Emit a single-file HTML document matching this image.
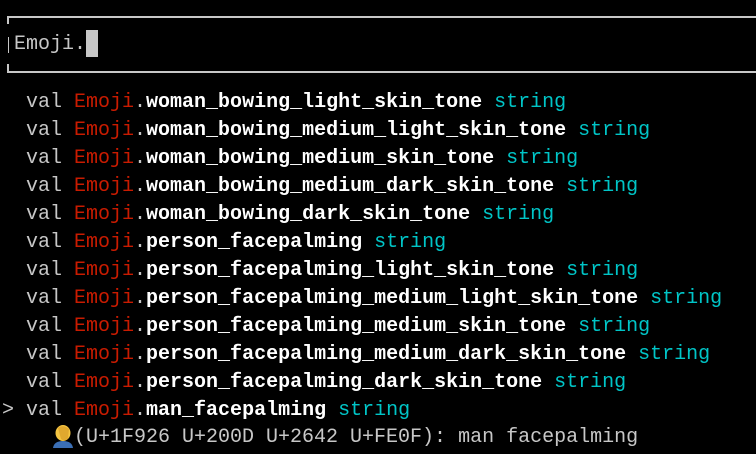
<!DOCTYPE html>
<html><head><style>
html,body{margin:0;padding:0;background:#000;width:756px;height:454px;overflow:hidden}
body{font-family:"Liberation Mono",monospace;font-size:20px;color:#c7c7c7;position:relative}
.l{position:absolute;left:2px;height:28px;line-height:28px;white-space:pre}
.r{color:#c91b00}.w{color:#fff;font-weight:bold}.c{color:#00c5c7}
.hl{position:absolute;background:#c7c7c7}
</style></head><body>
<div class="hl" style="left:7px;top:16px;width:749px;height:2px"></div>
<div class="hl" style="left:7px;top:16px;width:2px;height:8px"></div>
<div class="hl" style="left:7px;top:71px;width:749px;height:2px"></div>
<div class="hl" style="left:7px;top:64px;width:2px;height:8px"></div>
<div class="hl" style="left:8px;top:37px;width:1px;height:16px"></div>
<div class="l" style="left:14px;top:31px">Emoji.</div>
<div class="hl" style="left:86px;top:30px;width:12px;height:27px"></div>

<div class="l" style="top:89px">  val <span class="r">Emoji</span>.<span class="w">woman_bowing_light_skin_tone</span> <span class="c">string</span></div>
<div class="l" style="top:117px">  val <span class="r">Emoji</span>.<span class="w">woman_bowing_medium_light_skin_tone</span> <span class="c">string</span></div>
<div class="l" style="top:145px">  val <span class="r">Emoji</span>.<span class="w">woman_bowing_medium_skin_tone</span> <span class="c">string</span></div>
<div class="l" style="top:173px">  val <span class="r">Emoji</span>.<span class="w">woman_bowing_medium_dark_skin_tone</span> <span class="c">string</span></div>
<div class="l" style="top:201px">  val <span class="r">Emoji</span>.<span class="w">woman_bowing_dark_skin_tone</span> <span class="c">string</span></div>
<div class="l" style="top:229px">  val <span class="r">Emoji</span>.<span class="w">person_facepalming</span> <span class="c">string</span></div>
<div class="l" style="top:257px">  val <span class="r">Emoji</span>.<span class="w">person_facepalming_light_skin_tone</span> <span class="c">string</span></div>
<div class="l" style="top:285px">  val <span class="r">Emoji</span>.<span class="w">person_facepalming_medium_light_skin_tone</span> <span class="c">string</span></div>
<div class="l" style="top:313px">  val <span class="r">Emoji</span>.<span class="w">person_facepalming_medium_skin_tone</span> <span class="c">string</span></div>
<div class="l" style="top:341px">  val <span class="r">Emoji</span>.<span class="w">person_facepalming_medium_dark_skin_tone</span> <span class="c">string</span></div>
<div class="l" style="top:369px">  val <span class="r">Emoji</span>.<span class="w">person_facepalming_dark_skin_tone</span> <span class="c">string</span></div>
<div class="l" style="top:397px">&gt; val <span class="r">Emoji</span>.<span class="w">man_facepalming</span> <span class="c">string</span></div>
<div class="l" style="top:424px;left:74px">(U+1F926 U+200D U+2642 U+FE0F): man facepalming</div>
<svg style="position:absolute;left:52px;top:424px" width="22" height="24" viewBox="0 0 22 24">
<path d="M1 24 Q2 17 11 17 Q20 17 21 24Z" fill="#3b6fb5"/>
<ellipse cx="11" cy="9" rx="7.5" ry="8" fill="#f5c542"/>
<path d="M6 4 Q11 0 17 5 L16 15 Q12 18 9 15Z" fill="#e0a82e"/>
</svg>
</body></html>
